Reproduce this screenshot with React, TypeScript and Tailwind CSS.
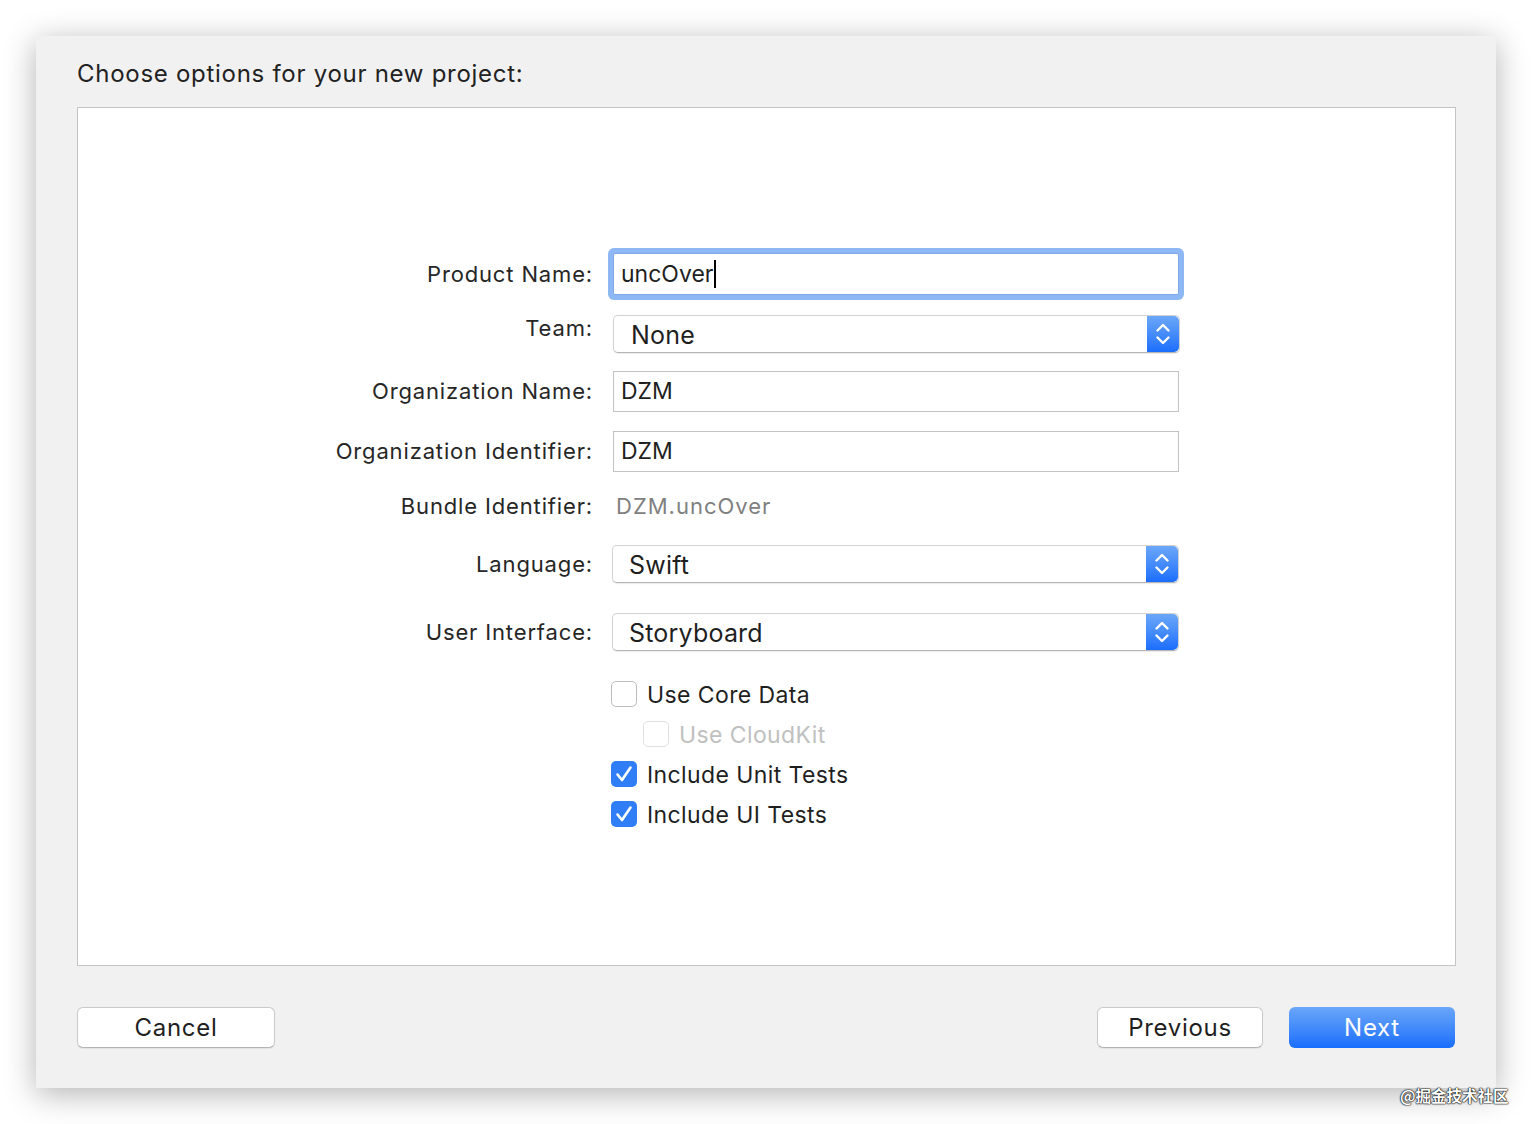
import React from "react";

const SF = { fontFamily: 'Inter, "Noto Sans", "Liberation Sans", sans-serif' };

function Stepper() {
  return (
    <div className="flex h-full w-[32px] shrink-0 items-center justify-center rounded-r-[5px] bg-gradient-to-b from-[#6ba7f8] to-[#1a6dfc]">
      <svg width="16" height="28" viewBox="0 0 16 28" fill="none" stroke="white" strokeWidth="2.4" strokeLinecap="round" strokeLinejoin="round">
        <path d="M2.5 10.5 L8 5 L13.5 10.5" />
        <path d="M2.5 17.5 L8 23 L13.5 17.5" />
      </svg>
    </div>
  );
}

function Popup({ value, pl = "pl-[16px]" }: { value: string; pl?: string }) {
  return (
    <div className="flex h-[38px] w-[567px] items-stretch rounded-[5px] border border-[#d2d2d2] border-b-[#b5b5b5] bg-white shadow-[0_1px_1px_rgba(0,0,0,0.08)]">
      <div className={`flex flex-1 items-center pt-[3px] text-[25px] tracking-[0.2px] text-[#1f1f1f] ${pl}`}>{value}</div>
      <Stepper />
    </div>
  );
}

function Field({ value }: { value: string }) {
  return (
    <div className="flex h-[41px] w-[566px] items-center border border-[#c3c3c3] bg-white pl-[7px] text-[23px] text-[#1f1f1f]">
      {value}
    </div>
  );
}

function Label({ children, top }: { children: React.ReactNode; top?: boolean }) {
  return (
    <div
      className={`w-[515px] shrink-0 text-right text-[22px] tracking-[0.85px] text-[#262626] ${
        top ? "self-start leading-[26px]" : ""
      }`}
    >
      {children}
    </div>
  );
}

function Checkbox({ checked, disabled, label }: { checked?: boolean; disabled?: boolean; label: string }) {
  return (
    <div className="flex h-[26px] items-center gap-[10px]">
      {checked ? (
        <div className="flex h-[26px] w-[26px] items-center justify-center rounded-[5px] bg-[#2f7ef6]">
          <svg width="26" height="26" viewBox="0 0 26 26" fill="none" stroke="white" strokeWidth="2.6" strokeLinecap="round" strokeLinejoin="round">
            <path d="M6.5 13.5 L11 19 L19.5 6.5" />
          </svg>
        </div>
      ) : (
        <div
          className={`h-[26px] w-[26px] rounded-[5px] border bg-white ${
            disabled ? "border-[#e0e0e0]" : "border-[#bdbdbd]"
          }`}
        />
      )}
      <span className={`pt-[2px] text-[23px] tracking-[0.4px] ${disabled ? "text-[#c0c0c0]" : "text-[#1f1f1f]"}`}>{label}</span>
    </div>
  );
}

export default function App() {
  return (
    <div className="relative h-[1124px] w-full bg-white p-[36px]" style={SF}>
      <div className="flex h-[1052px] w-[1460px] flex-col bg-[#f1f1f1] px-[41px] shadow-[0_6px_30px_rgba(0,0,0,0.3)]">
        <h1 className="mt-[23px] h-[48px] text-[24px] leading-[30px] tracking-[0.72px] text-[#222]">
          Choose options for your new project:
        </h1>

        <div className="flex h-[859px] w-[1379px] flex-col border border-[#c4c4c4] bg-white pt-[140px]">
          {/* Product Name */}
          <div className="flex h-[52px] items-center">
            <Label>Product Name:</Label>
            <div className="ml-[20px] flex h-[42px] w-[566px] items-center rounded-[2px] border border-[#7fa9e8] bg-white pl-[7px] text-[23px] text-[#1f1f1f] ring-[5px] ring-[#8db7f5]">
              uncOver
              <span className="ml-[1px] inline-block h-[28px] w-[2px] bg-black" />
            </div>
          </div>

          {/* Team */}
          <div className="mt-[15px] flex h-[38px] items-center">
            <Label top>Team:</Label>
            <div className="ml-[20px]">
              <Popup value="None" pl="pl-[17px]" />
            </div>
          </div>

          <div className="mt-[18px] flex h-[41px] items-center">
            <Label>Organization Name:</Label>
            <div className="ml-[20px]">
              <Field value="DZM" />
            </div>
          </div>

          <div className="mt-[19px] flex h-[41px] items-center">
            <Label>Organization Identifier:</Label>
            <div className="ml-[20px]">
              <Field value="DZM" />
            </div>
          </div>

          <div className="mt-[20px] flex h-[28px] items-center">
            <Label>Bundle Identifier:</Label>
            <div className="ml-[23px] text-[22px] tracking-[1px] text-[#808080]">DZM.uncOver</div>
          </div>

          <div className="mt-[25px] flex h-[38px] items-center">
            <Label>Language:</Label>
            <div className="ml-[19px]">
              <Popup value="Swift" />
            </div>
          </div>

          <div className="mt-[30px] flex h-[38px] items-center">
            <Label>User Interface:</Label>
            <div className="ml-[19px]">
              <Popup value="Storyboard" />
            </div>
          </div>

          <div className="ml-[533px] mt-[30px] flex flex-col gap-[14px]">
            <Checkbox label="Use Core Data" />
            <div className="ml-[32px]">
              <Checkbox label="Use CloudKit" disabled />
            </div>
            <Checkbox label="Include Unit Tests" checked />
            <Checkbox label="Include UI Tests" checked />
          </div>
        </div>

        <div className="mt-[41px] flex items-center">
          <button className="h-[41px] w-[198px] rounded-[6px] border border-[#c9c9c9] border-b-[#b3b3b3] bg-white text-[24px] tracking-[0.7px] text-[#1f1f1f] shadow-[0_1px_1px_rgba(0,0,0,0.06)]">
            Cancel
          </button>
          <div className="flex-1" />
          <button className="h-[41px] w-[166px] rounded-[6px] border border-[#c9c9c9] border-b-[#b3b3b3] bg-white text-[24px] tracking-[0.7px] text-[#1f1f1f] shadow-[0_1px_1px_rgba(0,0,0,0.06)]">
            Previous
          </button>
          <button className="ml-[26px] h-[41px] w-[166px] rounded-[6px] bg-gradient-to-b from-[#6aa6f8] to-[#176dfd] text-[24px] tracking-[0.7px] text-white">
            Next
          </button>
        </div>
      </div>

      <div
        className="absolute left-[1400px] top-[1084px] text-[15.5px] font-bold text-white [text-shadow:0_0_2px_#000,0_0_1px_#000,0_0_1px_#000]"
        style={{ fontFamily: '"Noto Sans CJK SC", "Noto Sans", sans-serif' }}
      >
        @掘金技术社区
      </div>
    </div>
  );
}
